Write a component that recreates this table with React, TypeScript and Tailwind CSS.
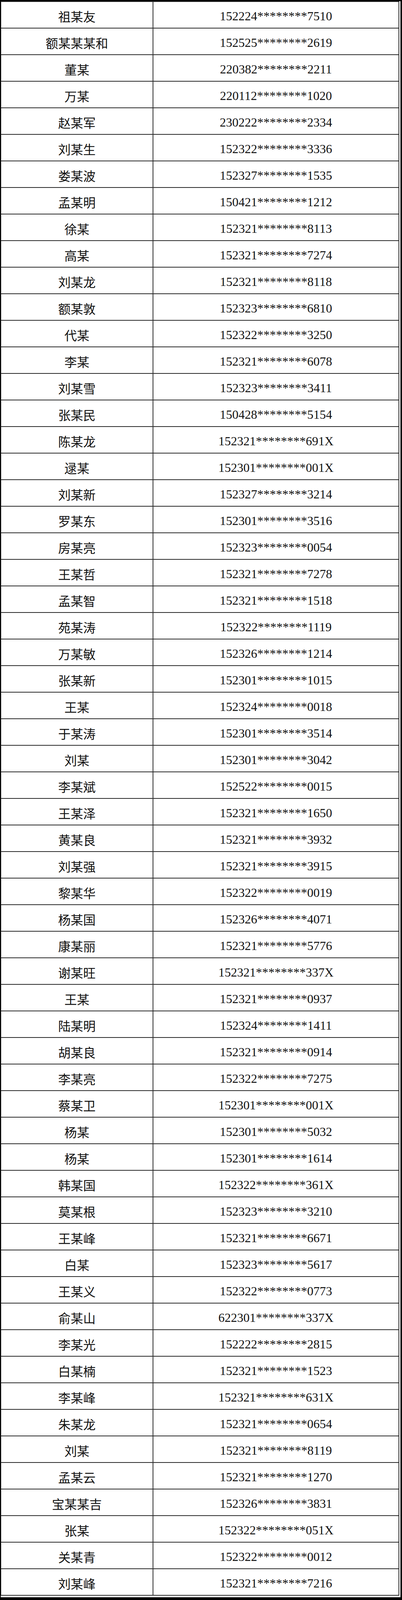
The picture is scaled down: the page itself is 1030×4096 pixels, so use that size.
const ROWS: [string, string][] = [
  ['祖某友', '152224********7510'],
  ['额某某某和', '152525********2619'],
  ['董某', '220382********2211'],
  ['万某', '220112********1020'],
  ['赵某军', '230222********2334'],
  ['刘某生', '152322********3336'],
  ['娄某波', '152327********1535'],
  ['孟某明', '150421********1212'],
  ['徐某', '152321********8113'],
  ['高某', '152321********7274'],
  ['刘某龙', '152321********8118'],
  ['额某敦', '152323********6810'],
  ['代某', '152322********3250'],
  ['李某', '152321********6078'],
  ['刘某雪', '152323********3411'],
  ['张某民', '150428********5154'],
  ['陈某龙', '152321********691X'],
  ['逯某', '152301********001X'],
  ['刘某新', '152327********3214'],
  ['罗某东', '152301********3516'],
  ['房某亮', '152323********0054'],
  ['王某哲', '152321********7278'],
  ['孟某智', '152321********1518'],
  ['苑某涛', '152322********1119'],
  ['万某敏', '152326********1214'],
  ['张某新', '152301********1015'],
  ['王某', '152324********0018'],
  ['于某涛', '152301********3514'],
  ['刘某', '152301********3042'],
  ['李某斌', '152522********0015'],
  ['王某泽', '152321********1650'],
  ['黄某良', '152321********3932'],
  ['刘某强', '152321********3915'],
  ['黎某华', '152322********0019'],
  ['杨某国', '152326********4071'],
  ['康某丽', '152321********5776'],
  ['谢某旺', '152321********337X'],
  ['王某', '152321********0937'],
  ['陆某明', '152324********1411'],
  ['胡某良', '152321********0914'],
  ['李某亮', '152322********7275'],
  ['蔡某卫', '152301********001X'],
  ['杨某', '152301********5032'],
  ['杨某', '152301********1614'],
  ['韩某国', '152322********361X'],
  ['莫某根', '152323********3210'],
  ['王某峰', '152321********6671'],
  ['白某', '152323********5617'],
  ['王某义', '152322********0773'],
  ['俞某山', '622301********337X'],
  ['李某光', '152222********2815'],
  ['白某楠', '152321********1523'],
  ['李某峰', '152321********631X'],
  ['朱某龙', '152321********0654'],
  ['刘某', '152321********8119'],
  ['孟某云', '152321********1270'],
  ['宝某某吉', '152326********3831'],
  ['张某', '152322********051X'],
  ['关某青', '152322********0012'],
  ['刘某峰', '152321********7216'],
];

export default function App() {
  return (
    <div className="w-[1030px] h-[4096px] bg-black pt-[3px] pl-[2px] overflow-hidden">
      <div className="w-[1024px] h-[4086px] bg-white">
        <div className="w-[1021px] border-t-2 border-l border-r-2 border-[#2a2a2a]">
          {ROWS.map(([name, id], i) => (
            <div key={i} className="flex h-[68px] border-b-2 border-[#2a2a2a]">
              <div className="w-[390px] shrink-0 border-r-2 border-[#2a2a2a] flex items-center justify-center pt-[5px] text-[32px] text-[#111] font-['Noto_Sans_CJK_SC',sans-serif]">
                {name}
              </div>
              <div className="flex-1 flex items-center justify-center pt-[5px] text-[32px] text-[#111] font-['Liberation_Serif',serif]">
                {id}
              </div>
            </div>
          ))}
        </div>
      </div>
    </div>
  );
}
